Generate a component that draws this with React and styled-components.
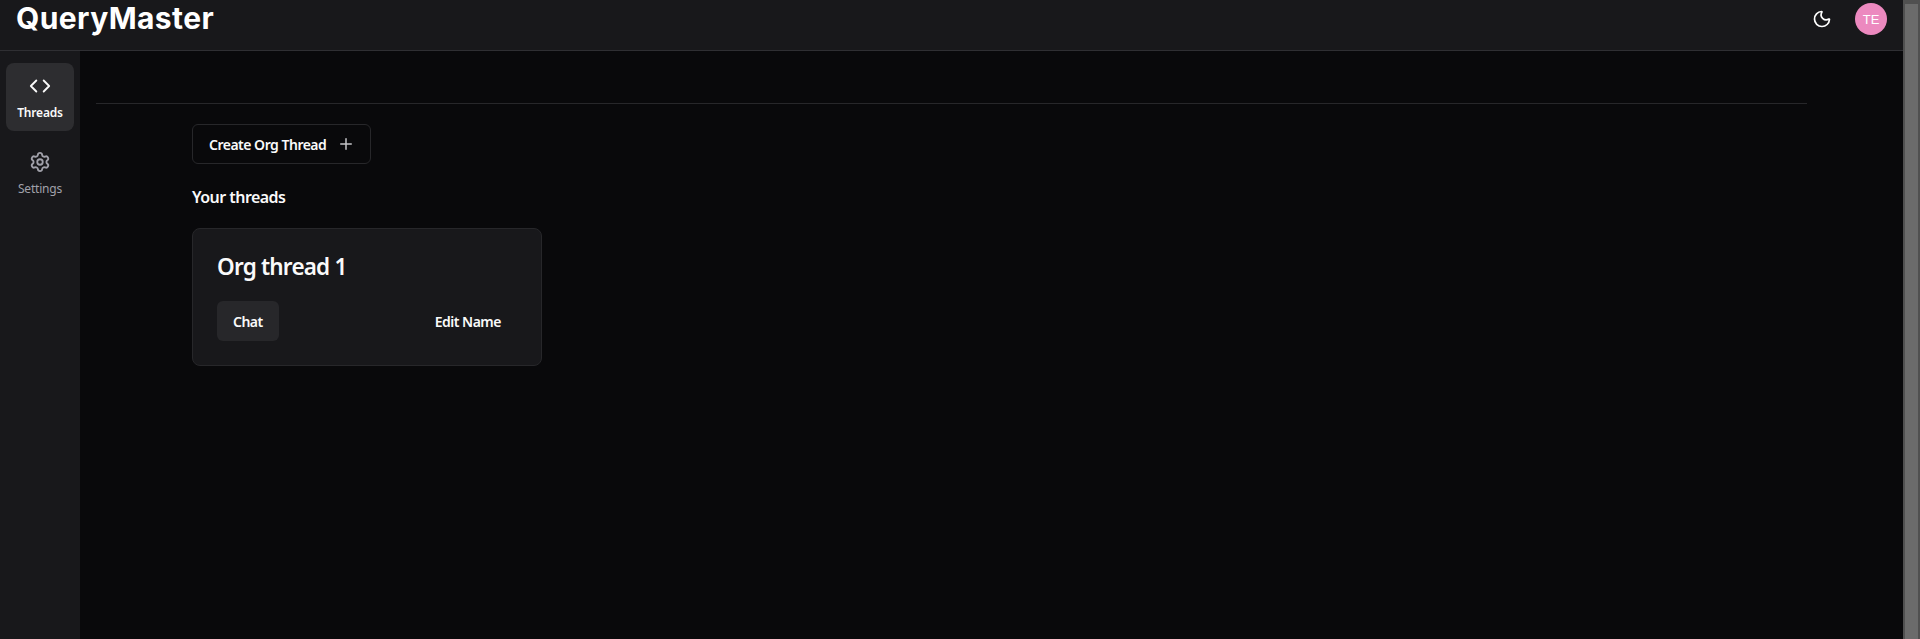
import React from 'react'
import styled, { createGlobalStyle } from 'styled-components'
import { Code, Settings, Moon, Plus } from 'lucide-react'

const GlobalStyle = createGlobalStyle`
  html, body {
    margin: 0;
    height: 100%;
    overflow: hidden;
    background: #09090b;
    color: #fafafa;
    font-family: "Noto Sans", sans-serif;
  }
  * {
    box-sizing: border-box;
  }
`

const Page = styled.div`
  height: 639px;
  display: flex;
`

const Main = styled.div`
  flex: 1;
  min-width: 0;
  display: flex;
  flex-direction: column;
`

const Scrollbar = styled.div`
  width: 17px;
  background: #505050;
  padding: 4px 2px 0;
`

const ScrollThumb = styled.div`
  height: 100%;
  background: #6b6b6b;
`

const Header = styled.header`
  height: 51px;
  flex-shrink: 0;
  display: flex;
  align-items: flex-start;
  justify-content: space-between;
  padding: 0 16px;
  background: #18181b;
  border-bottom: 1px solid #2f2f33;
`

const Logo = styled.div`
  font-family: "Inter", sans-serif;
  font-size: 30px;
  font-weight: 700;
  letter-spacing: 0.4px;
  line-height: 36px;
  color: #ffffff;
`

const HeaderRight = styled.div`
  display: flex;
  align-items: center;
  gap: 23px;
  height: 36px;
  margin-top: 1px;
`

const Avatar = styled.div`
  width: 32px;
  height: 32px;
  border-radius: 50%;
  background: #ec89bf;
  display: flex;
  align-items: center;
  justify-content: center;
  font-family: "Liberation Sans", sans-serif;
  font-size: 13px;
  color: #ffffff;
`

const Body = styled.div`
  flex: 1;
  display: flex;
  min-height: 0;
`

const Sidebar = styled.nav`
  width: 80px;
  flex-shrink: 0;
  background: #18181b;
  padding: 12px 6px;
  display: flex;
  flex-direction: column;
  gap: 8px;
`

const NavItem = styled.div`
  height: 68px;
  padding-top: 2px;
  border-radius: 8px;
  display: flex;
  flex-direction: column;
  align-items: center;
  justify-content: center;
  gap: 8px;
  font-size: 12px;
  letter-spacing: -0.2px;
  font-weight: ${p => (p.$active ? 600 : 400)};
  line-height: 16px;
  color: ${p => (p.$active ? '#fafafa' : '#a1a1aa')};
  background: ${p => (p.$active ? '#2d2d30' : 'transparent')};
`

const Content = styled.main`
  flex: 1;
  min-width: 0;
  padding: 52px 96px 0 16px;
`

const Divider = styled.hr`
  margin: 0;
  border: 0;
  height: 1px;
  background: #27272a;
`

const Section = styled.section`
  padding: 20px 0 0 96px;
`

const CreateButton = styled.button`
  height: 40px;
  width: 179px;
  padding: 0 0 0 16px;
  display: flex;
  align-items: center;
  gap: 11px;
  background: transparent;
  border: 1px solid #27272a;
  border-radius: 6px;
  color: #fafafa;
  font-family: inherit;
  font-size: 14px;
  font-weight: 600;
  letter-spacing: -0.5px;
`

const Heading = styled.h2`
  margin: 21px 0 19px;
  font-size: 16px;
  font-weight: 600;
  letter-spacing: -0.55px;
  line-height: 24px;
`

const Card = styled.div`
  width: 350px;
  height: 138px;
  padding: 24px;
  background: #18181b;
  border: 1px solid #27272a;
  border-radius: 8px;
`

const CardTitle = styled.h3`
  margin: 0 0 20px;
  font-size: 22.5px;
  font-weight: 600;
  letter-spacing: -0.8px;
  line-height: 28px;
`

const CardActions = styled.div`
  display: flex;
  justify-content: space-between;
`

const ActionButton = styled.button`
  height: 40px;
  padding: 0 16px;
  border: 0;
  border-radius: 6px;
  background: ${p => (p.$filled ? '#27272a' : 'transparent')};
  color: #fafafa;
  font-family: inherit;
  font-size: 14px;
  font-weight: 600;
  letter-spacing: -0.5px;
`

export default function App() {
  return (
    <Page>
      <GlobalStyle />
      <Main>
        <Header>
          <Logo>QueryMaster</Logo>
          <HeaderRight>
            <Moon size={20} color="#ffffff" strokeWidth={2} />
            <Avatar>TE</Avatar>
          </HeaderRight>
        </Header>
        <Body>
          <Sidebar>
            <NavItem $active>
              <Code size={22} strokeWidth={2} />
              Threads
            </NavItem>
            <NavItem>
              <Settings size={22} strokeWidth={2} />
              Settings
            </NavItem>
          </Sidebar>
          <Content>
            <Divider />
            <Section>
              <CreateButton>
                Create Org Thread
                <Plus size={18} color="#c4c4c8" />
              </CreateButton>
              <Heading>Your threads</Heading>
              <Card>
                <CardTitle>Org thread 1</CardTitle>
                <CardActions>
                  <ActionButton $filled>Chat</ActionButton>
                  <ActionButton>Edit Name</ActionButton>
                </CardActions>
              </Card>
            </Section>
          </Content>
        </Body>
      </Main>
      <Scrollbar>
        <ScrollThumb />
      </Scrollbar>
    </Page>
  )
}
